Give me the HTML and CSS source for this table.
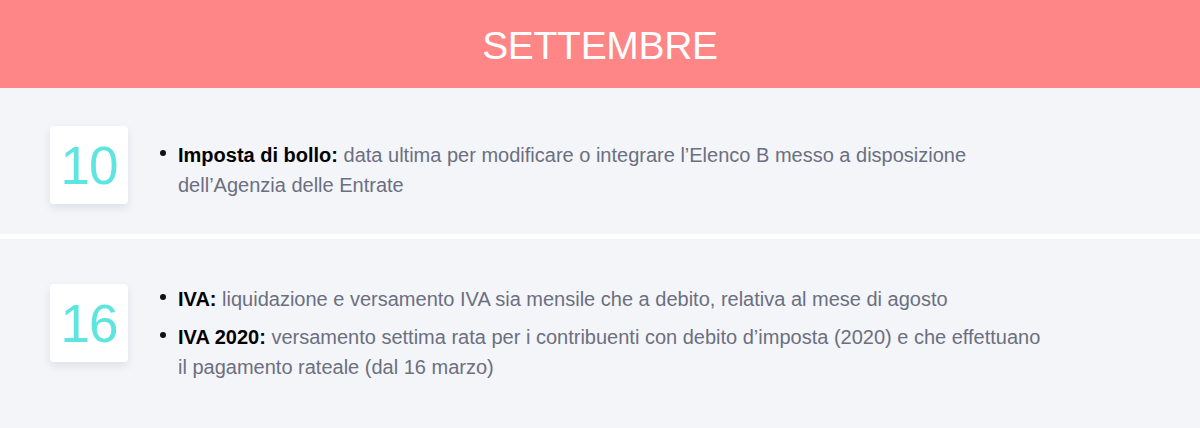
FILE: index.html
```html
<!DOCTYPE html>
<html lang="it">
<head>
<meta charset="utf-8">
<title>Settembre</title>
<link rel="stylesheet" href="styles.css">
</head>
<body>
<header class="month">
  <h1 class="month-title">SETTEMBRE</h1>
</header>
<section class="day day-first">
  <div class="date-box"><span class="date-num">10</span></div>
  <ul class="events">
    <li class="event"><strong>Imposta di bollo:</strong> data ultima per modificare o integrare l’Elenco B messo a disposizione dell’Agenzia delle Entrate</li>
  </ul>
</section>
<section class="day day-second">
  <div class="date-box"><span class="date-num">16</span></div>
  <ul class="events">
    <li class="event"><strong>IVA:</strong> liquidazione e versamento IVA sia mensile che a debito, relativa al mese di agosto</li>
    <li class="event"><strong>IVA 2020:</strong> versamento settima rata per i contribuenti con debito d’imposta (2020) e che effettuano il pagamento rateale (dal 16 marzo)</li>
  </ul>
</section>
</body>
</html>
```
FILE: styles.css
```css
html, body {
  margin: 0;
  padding: 0;
}
body {
  background: #ffffff;
  font-family: "Liberation Sans", Arial, Helvetica, sans-serif;
  color: #6b6f80;
}
.month {
  background: #ff8686;
  height: 88px;
  display: flex;
  align-items: center;
  justify-content: center;
}
.month-title {
  margin: 0;
  color: #ffffff;
  font-size: 39px;
  font-weight: 400;
  letter-spacing: -0.3px;
  line-height: 1;
  padding-top: 2px;
}
.day {
  background: #f4f5f9;
  display: flex;
  align-items: flex-start;
  padding: 38px 50px 30px 50px;
}
.day-first {
  margin-bottom: 5px;
}
.day-second {
  padding-top: 45px;
  padding-bottom: 60px;
}
.date-box {
  width: 78px;
  height: 78px;
  flex: none;
  background: #ffffff;
  border-radius: 4px;
  box-shadow: 0 4px 8px rgba(40, 50, 90, 0.10);
  display: flex;
  align-items: center;
  justify-content: center;
}
.date-num {
  color: #5ee5e0;
  font-size: 53px;
  line-height: 1;
  letter-spacing: -1px;
}
.events {
  margin: 14px 0 0 50px;
  padding: 0;
  list-style: none;
  width: 868px;
}
.day-second .events {
  margin-top: 0;
}
.event {
  position: relative;
  font-size: 20px;
  line-height: 30px;
  margin-bottom: 8px;
}
.event:last-child {
  margin-bottom: 0;
}
.event::before {
  content: "";
  position: absolute;
  left: -18px;
  top: 10px;
  width: 6px;
  height: 6px;
  border-radius: 50%;
  background: #111111;
}
.event strong {
  color: #000000;
  font-weight: 700;
}
```
